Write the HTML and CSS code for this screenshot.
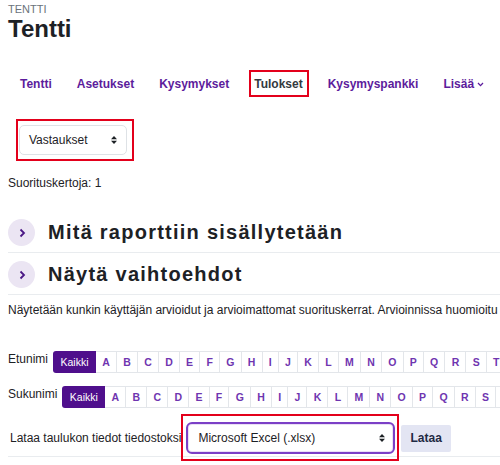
FILE: index.html
```html
<!DOCTYPE html>
<html lang="fi">
<head>
<meta charset="utf-8">
<title>Tentti</title>
<link rel="stylesheet" href="styles.css">
</head>
<body>
<div class="page">
  <div class="crumb">TENTTI</div>
  <h1 class="title">Tentti</h1>

  <nav class="tabs">
    <a class="tab">Tentti</a>
    <a class="tab">Asetukset</a>
    <a class="tab">Kysymykset</a>
    <a class="tab active">Tulokset</a>
    <a class="tab">Kysymyspankki</a>
    <a class="tab more">Lisää
      <svg class="caret" width="7" height="5" viewBox="0 0 7 5"><polyline points="1,1 3.5,3.6 6,1" fill="none" stroke="#5c1c9c" stroke-width="1.3"/></svg>
    </a>
  </nav>

  <div class="report-select">
    <div class="select small">
      <span>Vastaukset</span>
      <svg width="6" height="8" viewBox="0 0 6 8"><polygon points="0,3.2 3,0 6,3.2" fill="#1d2125"/><polygon points="0,4.8 3,8 6,4.8" fill="#1d2125"/></svg>
    </div>
  </div>

  <p class="count">Suorituskertoja: 1</p>

  <div class="collapse-head">
    <span class="circle"><svg width="8" height="10" viewBox="0 0 8 10"><polyline points="2.5,1.5 6,5 2.5,8.5" fill="none" stroke="#4a1785" stroke-width="1.8"/></svg></span>
    <h2>Mitä raporttiin sisällytetään</h2>
  </div>
  <div class="collapse-head">
    <span class="circle"><svg width="8" height="10" viewBox="0 0 8 10"><polyline points="2.5,1.5 6,5 2.5,8.5" fill="none" stroke="#4a1785" stroke-width="1.8"/></svg></span>
    <h2>Näytä vaihtoehdot</h2>
  </div>

  <p class="info">Näytetään kunkin käyttäjän arvioidut ja arvioimattomat suorituskerrat. Arvioinnissa huomioitu arvosana on korostettu.</p>

  <div class="initials first">
    <span class="ilabel">Etunimi</span>
    <div class="bar">
      <span class="all">Kaikki</span>
      <a>A</a><a>B</a><a>C</a><a>D</a><a>E</a><a>F</a><a>G</a><a>H</a><a>I</a><a>J</a><a>K</a><a>L</a><a>M</a><a>N</a><a>O</a><a>P</a><a>Q</a><a>R</a><a>S</a><a>T</a><a>U</a><a>V</a><a>W</a><a>X</a><a>Y</a><a>Z</a><a>Å</a><a>Ä</a><a>Ö</a>
    </div>
  </div>
  <div class="initials">
    <span class="ilabel">Sukunimi</span>
    <div class="bar">
      <span class="all">Kaikki</span>
      <a>A</a><a>B</a><a>C</a><a>D</a><a>E</a><a>F</a><a>G</a><a>H</a><a>I</a><a>J</a><a>K</a><a>L</a><a>M</a><a>N</a><a>O</a><a>P</a><a>Q</a><a>R</a><a>S</a><a>T</a><a>U</a><a>V</a><a>W</a><a>X</a><a>Y</a><a>Z</a><a>Å</a><a>Ä</a><a>Ö</a>
    </div>
  </div>

  <div class="download">
    <span class="dlabel">Lataa taulukon tiedot tiedostoksi</span>
    <div class="select format">
      <span>Microsoft Excel (.xlsx)</span>
      <svg width="6" height="8" viewBox="0 0 6 8"><polygon points="0,3.2 3,0 6,3.2" fill="#1d2125"/><polygon points="0,4.8 3,8 6,4.8" fill="#1d2125"/></svg>
    </div>
    <button class="btn">Lataa</button>
  </div>
</div>
</body>
</html>
```

FILE: styles.css
```css
html, body {
  margin: 0;
  padding: 0;
  background: #ffffff;
}

body {
  width: 500px;
  height: 465px;
  overflow: hidden;
  font-family: "Liberation Sans", Arial, sans-serif;
  font-size: 12px;
  color: #1d2125;
}

.page {
  padding-left: 8px;
}

.crumb {
  padding-top: 3px;
  font-size: 11px;
  line-height: 12px;
  color: #6a737b;
}

.title {
  margin: 0;
  font-size: 24px;
  line-height: 28px;
  font-weight: bold;
  color: #1d2125;
}

.tabs {
  display: flex;
  align-items: center;
  gap: 25px;
  margin-top: 34px;
  padding-left: 12px;
  line-height: 14px;
  white-space: nowrap;
}

.tab {
  font-size: 12px;
  font-weight: bold;
  color: #5c1c9c;
}

.tab.active {
  position: relative;
  color: #343a40;
}

.tab.active::after {
  content: "";
  position: absolute;
  left: -5px;
  right: -6px;
  top: -7px;
  bottom: -6px;
  border: 2px solid #e3001b;
}

.tab.more {
  display: flex;
  align-items: center;
  gap: 3px;
}

.caret {
  margin-top: 1px;
}

.report-select {
  display: flex;
  width: fit-content;
  margin: 28px 0 0 8px;
  padding: 4px 5px 4px 1px;
  border: 2px solid #e3001b;
}

.select {
  display: flex;
  align-items: center;
  justify-content: space-between;
  box-sizing: border-box;
  background: #ffffff;
  white-space: nowrap;
}

.select.small {
  width: 108px;
  height: 30px;
  padding: 0 9px 0 9px;
  border: 1px solid #dee2e6;
  border-radius: 5px;
}

.count {
  margin: 15px 0 0;
  line-height: 14px;
}

.collapse-head {
  display: flex;
  align-items: center;
  gap: 13px;
  padding: 8px 0 6px;
  border-bottom: 1px solid #e9ecef;
}

.count + .collapse-head {
  margin-top: 21px;
}

.circle {
  display: flex;
  align-items: center;
  justify-content: center;
  width: 27px;
  height: 27px;
  border-radius: 50%;
  background: #ebe5f3;
  flex: none;
}

.collapse-head h2 {
  margin: 0;
  font-size: 20px;
  line-height: 27px;
  font-weight: bold;
  letter-spacing: 1.25px;
  color: #1d2125;
  white-space: nowrap;
}

.info {
  margin: 8px 0 0;
  line-height: 14px;
  white-space: nowrap;
}

.initials {
  display: flex;
  align-items: flex-start;
  gap: 5px;
  margin-top: 13px;
  white-space: nowrap;
}

.initials.first {
  margin-top: 34px;
}

.ilabel {
  margin-top: 1px;
  line-height: 14px;
  font-size: 12px;
}

.bar {
  display: flex;
  flex: none;
}

.bar .all {
  box-sizing: border-box;
  height: 22px;
  line-height: 22px;
  padding: 0 7.5px;
  font-size: 10.5px;
  color: #ffffff;
  background: #4f0f8c;
  border-radius: 3px 0 0 3px;
}

.bar a {
  box-sizing: border-box;
  height: 22px;
  line-height: 20px;
  padding: 0 6.2px;
  font-size: 10.5px;
  font-weight: bold;
  color: #6f35b0;
  background: #ffffff;
  border-top: 1px solid #e3e6ea;
  border-bottom: 1px solid #e3e6ea;
  border-right: 1px solid #e3e6ea;
}

.download {
  display: flex;
  align-items: center;
  margin-top: 14px;
  padding-bottom: 2px;
  border-bottom: 1px solid #e9ecef;
  white-space: nowrap;
}

.dlabel {
  margin-left: 2px;
  margin-right: 5px;
  line-height: 14px;
}

.select.format {
  position: relative;
  width: 209px;
  height: 32px;
  padding: 0 8px 0 10px;
  border: 2px solid #7b3fc6;
  border-radius: 6px;
  box-shadow: inset 0 0 0 1px #e9e0f5;
}

.select.format::after {
  content: "";
  position: absolute;
  left: -7px;
  right: -6px;
  top: -10px;
  bottom: -9px;
  border: 2px solid #e3001b;
}

.btn {
  margin-left: 6px;
  height: 27px;
  padding: 0 9px;
  border: none;
  border-radius: 2px;
  background: #e3e5f3;
  font-family: "Liberation Sans", Arial, sans-serif;
  font-size: 12px;
  font-weight: bold;
  color: #1f2a44;
}
```
